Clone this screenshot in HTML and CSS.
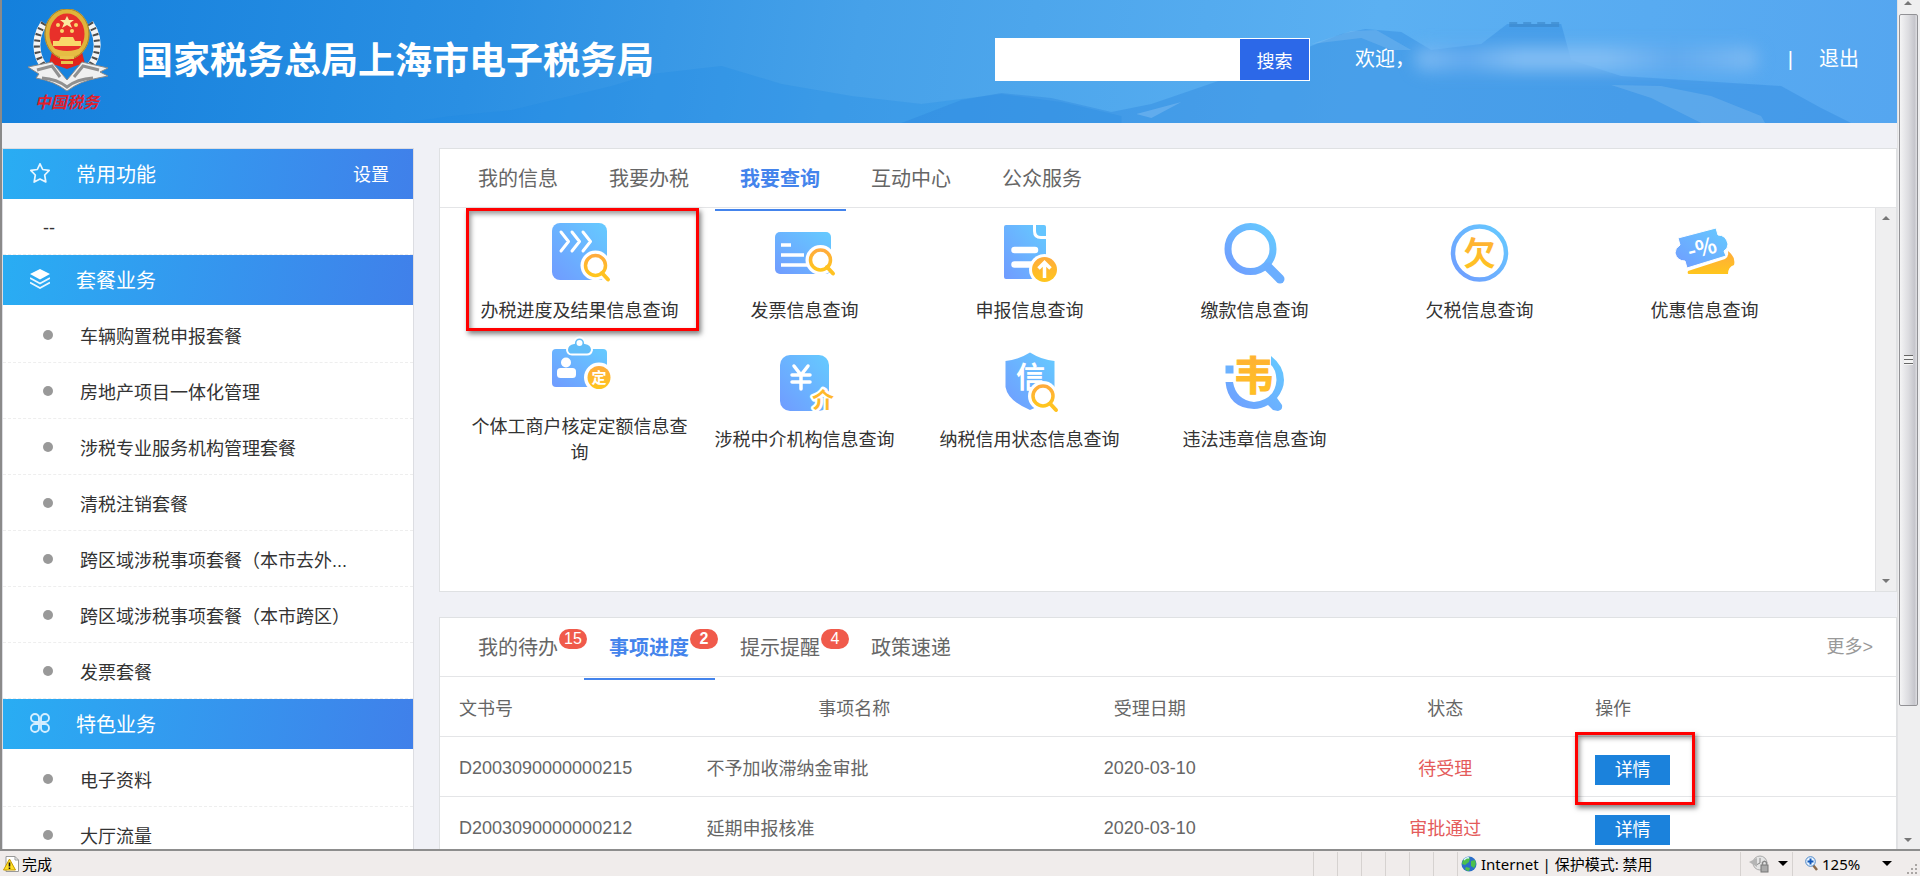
FILE: index.html
```html
<!DOCTYPE html>
<html lang="zh-CN">
  <head>
    <meta charset="utf-8" />
    <title>国家税务总局上海市电子税务局</title>
    <link rel="stylesheet" href="styles.css">
  </head>
  <body>
    <svg class="defs" width="0" height="0" aria-hidden="true">
      <defs>
        <linearGradient id="blue" x1="0" y1="1" x2="1" y2="0">
          <stop offset="0" stop-color="#709bff" />
          <stop offset="1" stop-color="#65cbff" />
        </linearGradient>
        <linearGradient id="gold" x1="0" y1="0" x2="0" y2="1">
          <stop offset="0" stop-color="#ffab3d" />
          <stop offset="1" stop-color="#ffc61d" />
        </linearGradient>
      </defs>
    </svg>

    <div class="window">
      <div class="viewport">
        <div class="page">
          <header class="header">
            <svg class="scenery" viewBox="0 0 1896 123" preserveAspectRatio="none" aria-hidden="true">
              <path d="M400 123 L450 116 L510 110 L560 98 L610 86 L650 74 L720 66 L780 84 L850 96 L920 104 L1000 94 L1060 102 L1120 116 L1120 123Z" fill="#1d87e4" opacity=".25" />
              <path d="M900 123 L960 100 L1000 93 L1050 98 L1110 112 L1150 104 L1220 80 L1290 54 L1340 34 L1364 29 L1400 32 L1430 50 L1480 44 L1506 24 L1560 24 L1570 60 L1620 76 L1780 86 L1820 108 L1850 123Z" fill="#2c88df" opacity=".4" />
              <path d="M1310 44 L1350 31 L1375 30 L1410 50 L1390 50 L1360 38Z" fill="#9cccf5" opacity=".25" />
              <path d="M1610 85 L1660 86 L1710 96 L1760 116 L1764 123 L1700 123 L1650 98Z" fill="#9cccf5" opacity=".25" />
              <path d="M1135 114 L1180 102 L1150 118Z" fill="#9cccf5" opacity=".35" />
              <path d="M1508 22 h8 v2 h6 v-2 h8 v2 h6 v-2 h8 v2 h6 v-2 h8 v5 h-50z" fill="#3b86c8" opacity=".6" />
            </svg>
            <div class="brand">
              <svg class="emblem" viewBox="0 0 84 106" role="img" aria-label="中国税务">
                <g fill="none" stroke="#f4f4f4" stroke-width="7">
                  <path d="M18 14 C6 32 8 56 33 70" />
                  <path d="M64 14 C76 32 74 56 49 70" />
                </g>
                <g fill="none" stroke="#4c4c4c" stroke-width="6" stroke-dasharray="2 4">
                  <path d="M18 14 C6 32 8 56 33 70" />
                  <path d="M64 14 C76 32 74 56 49 70" />
                </g>
                <ellipse cx="41" cy="26" rx="20" ry="25" fill="#df2a20" />
                <path d="M26 43 h30 l4 16 -8 -3 -11 4 -11 -4 -8 3z" fill="#e0241c" />
                <ellipse cx="41" cy="25" rx="20" ry="23" fill="#e8302a" stroke="#dfb43a" stroke-width="5" />
                <ellipse cx="41" cy="25" rx="22" ry="25" fill="none" stroke="#a8842b" stroke-width="1" />
                <path d="M41 7 l2 4 5 0 -4 3 2 5 -5 -3 -5 3 2 -5 -4 -3 5 0z" fill="#fbe9a0" />
                <g fill="#f9d86a">
                  <circle cx="32" cy="16" r="2" />
                  <circle cx="50" cy="16" r="2" />
                  <circle cx="36" cy="22" r="2" />
                  <circle cx="46" cy="22" r="2" />
                  <path d="M35 28 h12 l2 4 h6 v5 h-28 v-5 h6z" />
                </g>
                <path d="M25 38 Q41 46 57 38 L53 45 Q41 51 29 45Z" fill="#e6bd43" />
                <path d="M34 47 h14 v3 h-14z M35 52 h12 v3 h-12z" fill="#e9c34c" />
                <path d="M2 58 L26 53 L41 71 L56 53 L82 59 L74 63 L82 67 L72 69 Q54 72 41 82 Q28 72 10 69 L13 65Z" fill="#f0f0f0" stroke="#8b8b8b" />
                <path d="M11 61 L26 57 L34 68 M73 61 L57 57 L48 68 M16 69 Q31 70 41 78 Q51 70 67 69" fill="none" stroke="#909090" stroke-width="3" />
                <text class="emblem-text" x="41" y="99" text-anchor="middle">中国税务</text>
              </svg>
              <h1 class="brand-title">国家税务总局上海市电子税务局</h1>
            </div>
            <form class="search">
              <input class="search-input" type="text" aria-label="搜索内容" />
              <button class="search-button" type="button">搜索</button>
            </form>
            <div class="user">
              <span>欢迎，</span>
              <span class="user-name"></span>
              <span class="user-divider">|</span>
              <a class="user-exit" href="#">退出</a>
            </div>
          </header>

          <div class="content">
            <nav class="sidebar">
              <h2 class="side-title">
                <svg class="side-icon" viewBox="0 0 20 20" aria-hidden="true"><path d="M10 .8 L12.700 6.500 L19.200 7.300 L14.700 12 L15.800 19 L10 16 L4.200 19 L5.300 12 L.8 7.300 L7.300 6.500Z" fill="none" stroke="#e8f6ff" stroke-width="1.700" stroke-linejoin="round" /></svg>
                常用功能
                <a class="side-setting" href="#">设置</a>
              </h2>
              <p class="side-empty">--</p>

              <h2 class="side-title">
                <svg class="side-icon" viewBox="0 0 20 20" aria-hidden="true"><path d="M10 0 L20 5 L10 10.500 L0 5Z" fill="#fff" /><path d="M0 9 L10 14.500 L20 9 M0 13.500 L10 19 L20 13.500" fill="none" stroke="#e8f6ff" stroke-width="1.800" /></svg>
                套餐业务
              </h2>
              <ul class="side-list">
                <li><a href="#">车辆购置税申报套餐</a></li>
                <li><a href="#">房地产项目一体化管理</a></li>
                <li><a href="#">涉税专业服务机构管理套餐</a></li>
                <li><a href="#">清税注销套餐</a></li>
                <li><a href="#">跨区域涉税事项套餐（本市去外...</a></li>
                <li><a href="#">跨区域涉税事项套餐（本市跨区）</a></li>
                <li><a href="#">发票套餐</a></li>
              </ul>

              <h2 class="side-title">
                <svg class="side-icon" viewBox="0 0 20 20" aria-hidden="true"><path d="M9 9 H5 A4 4 0 1 1 9 5Z M11 9 V5 A4 4 0 1 1 15 9Z M9 11 V15 A4 4 0 1 1 5 11Z M11 11 H15 A4 4 0 1 1 11 15Z" fill="none" stroke="#d4eeff" stroke-width="1.900" /></svg>
                特色业务
              </h2>
              <ul class="side-list">
                <li><a href="#">电子资料</a></li>
                <li><a href="#">大厅流量</a></li>
              </ul>
            </nav>

            <main class="main">
              <section class="panel">
                <div class="tabs">
                  <a class="tab" href="#">我的信息</a>
                  <a class="tab" href="#">我要办税</a>
                  <a class="tab active" href="#">我要查询</a>
                  <a class="tab" href="#">互动中心</a>
                  <a class="tab" href="#">公众服务</a>
                </div>
                <div class="service-box">
                  <div class="services">
                    <a class="service marked" href="#">
                      <svg class="service-icon" viewBox="0 0 62 62" aria-hidden="true">
                        <rect x="3" y="1" width="55" height="57" rx="8" fill="url(#blue)" />
                        <path d="M12 10 l7.500 9.500 -7.500 9.500 M23 10 l7.500 9.500 -7.500 9.500 M34 10 l7.500 9.500 -7.500 9.500" fill="none" stroke="#fff" stroke-width="3" stroke-linecap="round" stroke-linejoin="round" />
                        <circle cx="46.500" cy="43.500" r="15" fill="#fff" />
                        <path d="M53 51 L59 58" stroke="#fff" stroke-width="8" />
                        <circle cx="46.500" cy="43.500" r="10" fill="#fff" stroke="url(#gold)" stroke-width="3.500" />
                        <path d="M53 51 L59 57.500" stroke="#ffc222" stroke-width="4" stroke-linecap="round" />
                      </svg>
                      <span class="service-name">办税进度及结果信息查询</span>
                    </a>
                    <a class="service" href="#">
                      <svg class="service-icon" viewBox="0 0 62 62" aria-hidden="true">
                        <rect x="1" y="10" width="56" height="42" rx="5" fill="url(#blue)" />
                        <path d="M7 23 H17 M7 33 H30 M7 43 H34" stroke="#fff" stroke-width="3.500" />
                        <circle cx="46.500" cy="38" r="15" fill="#fff" />
                        <circle cx="46.500" cy="38" r="10" fill="#fff" stroke="url(#gold)" stroke-width="3.500" />
                        <path d="M53 45 L59 51.500" stroke="#ffc222" stroke-width="4" stroke-linecap="round" />
                      </svg>
                      <span class="service-name">发票信息查询</span>
                    </a>
                    <a class="service" href="#">
                      <svg class="service-icon" viewBox="0 0 62 62" aria-hidden="true">
                        <path d="M7 3 H34 V9 Q34 17 42 17 H47 V57 H7 Q5 57 5 55 V5 Q5 3 7 3Z" fill="url(#blue)" />
                        <path d="M37 3 H45 Q47 3 47 5 V14 H42 Q37 14 37 9Z" fill="#65c5ff" />
                        <path d="M15.500 28 H36 M15.500 42.500 H32" stroke="#fff" stroke-width="6.500" stroke-linecap="round" />
                        <circle cx="45.500" cy="47.500" r="15.500" fill="#fff" />
                        <circle cx="45.500" cy="47.500" r="12.500" fill="url(#gold)" />
                        <path d="M45.500 56 V41 M39.500 46.500 L45.500 40.500 L51.500 46.500" fill="none" stroke="#fff" stroke-width="3.500" />
                      </svg>
                      <span class="service-name">申报信息查询</span>
                    </a>
                    <a class="service" href="#">
                      <svg class="service-icon" viewBox="0 0 62 62" aria-hidden="true">
                        <circle cx="26.500" cy="27" r="22.500" fill="none" stroke="url(#blue)" stroke-width="7" />
                        <path d="M44 45 L56 57" stroke="#6baeff" stroke-width="9" stroke-linecap="round" />
                      </svg>
                      <span class="service-name">缴款信息查询</span>
                    </a>
                    <a class="service" href="#">
                      <svg class="service-icon" viewBox="0 0 62 62" aria-hidden="true">
                        <circle cx="30.500" cy="31" r="26.500" fill="none" stroke="url(#blue)" stroke-width="4.500" />
                        <text class="glyph" x="30.500" y="43" font-size="32" text-anchor="middle" fill="url(#gold)">欠</text>
                      </svg>
                      <span class="service-name">欠税信息查询</span>
                    </a>
                    <a class="service" href="#">
                      <svg class="service-icon" viewBox="0 0 62 62" aria-hidden="true">
                        <path d="M14 49 L51 37 Q55 35 54 29 Q62 35 60 43 Q54 45 54 52 H15 Q13 52 14 49Z" fill="url(#gold)" />
                        <path d="M4 16 L42 6 L44 13 Q52 13 54 22 Q54 27 50 29 L52 34 L13 46 L11 39 Q3 39 1 31 Q1 26 6 23Z" fill="url(#blue)" stroke="#fff" stroke-width="1" />
                        <text class="glyph" x="28" y="34" font-size="22" text-anchor="middle" fill="#fff" transform="rotate(-14 28 26)">-%</text>
                      </svg>
                      <span class="service-name">优惠信息查询</span>
                    </a>
                    <a class="service" href="#">
                      <svg class="service-icon" viewBox="0 0 62 62" aria-hidden="true">
                        <rect x="3" y="11" width="55" height="38" rx="4" fill="url(#blue)" />
                        <path d="M25 5 A5.500 5.500 0 0 1 36 5 Q43 6 43 12 Q42 16.500 38 16.500 H23 Q18.500 16.500 18 12 Q18 6 25 5Z" fill="#62bdf8" stroke="#fff" stroke-width="2" />
                        <circle cx="30.500" cy="5" r="3" fill="#fff" />
                        <circle cx="17" cy="24.500" r="5" fill="#fff" />
                        <rect x="8" y="30" width="19" height="10" rx="3.500" fill="#fff" />
                        <circle cx="50" cy="39.500" r="15" fill="#fff" />
                        <circle cx="50" cy="39.500" r="11.500" fill="url(#gold)" />
                        <text class="glyph" x="50" y="45" font-size="15" text-anchor="middle" fill="#fff">定</text>
                      </svg>
                      <span class="service-name">个体工商户核定定额信息查询</span>
                    </a>
                    <a class="service" href="#">
                      <svg class="service-icon" viewBox="0 0 62 62" aria-hidden="true">
                        <rect x="6" y="4" width="49" height="56" rx="10" fill="url(#blue)" />
                        <path d="M20 15 L27 24 L34 15 M27 24 V38 M18 24 H36 M18 31 H36" fill="none" stroke="#fff" stroke-width="3.500" stroke-linecap="round" />
                        <text class="glyph" x="49" y="57" font-size="22" text-anchor="middle" fill="#ffb92c" stroke="#fff" stroke-width="5" stroke-linejoin="round" paint-order="stroke">介</text>
                      </svg>
                      <span class="service-name">涉税中介机构信息查询</span>
                    </a>
                    <a class="service" href="#">
                      <svg class="service-icon" viewBox="0 0 62 62" aria-hidden="true">
                        <path d="M31 1.500 Q43 9 55.500 10 V36 Q53 50 31 59 Q9 50 6.500 36 V10 Q19 9 31 1.500Z" fill="url(#blue)" />
                        <text class="glyph" x="31.500" y="37" font-size="29" text-anchor="middle" fill="#fff">信</text>
                        <circle cx="44" cy="45" r="15" fill="#fff" />
                        <circle cx="44" cy="45" r="10" fill="#fff" stroke="url(#gold)" stroke-width="3.500" />
                        <path d="M51 52.500 L57 59" stroke="#ffc222" stroke-width="4" stroke-linecap="round" />
                      </svg>
                      <span class="service-name">纳税信用状态信息查询</span>
                    </a>
                    <a class="service" href="#">
                      <svg class="service-icon" viewBox="0 0 62 62" aria-hidden="true">
                        <path d="M47 5 Q60 15 60 29 Q60 38 53 47 L58 54 Q59 59 54 60 L49 59 L44 54 Q37 58 30 58 Q4 57 1.500 31 H9 Q12 49 30 51 Q51 49 52.500 29 Q52 18 47 14Z" fill="url(#blue)" />
                        <rect x="1.500" y="14.500" width="8" height="8" fill="#6cb2ff" />
                        <text class="glyph heavy" x="29.500" y="39" font-size="40" text-anchor="middle" fill="url(#gold)" stroke="#ffb92c">韦</text>
                      </svg>
                      <span class="service-name">违法违章信息查询</span>
                    </a>
                  </div>
                  <div class="scrollbar" aria-hidden="true">
                    <span class="arrow up"></span>
                    <span class="arrow down"></span>
                  </div>
                </div>
              </section>

              <section class="panel">
                <div class="tabs">
                  <a class="tab" href="#">我的待办<span class="badge">15</span></a>
                  <a class="tab active" href="#">事项进度<span class="badge">2</span></a>
                  <a class="tab" href="#">提示提醒<span class="badge">4</span></a>
                  <a class="tab" href="#">政策速递</a>
                  <a class="more" href="#">更多&gt;</a>
                </div>
                <table class="progress">
                  <thead>
                    <tr>
                      <th class="col-no">文书号</th>
                      <th class="col-name">事项名称</th>
                      <th class="col-date">受理日期</th>
                      <th class="col-state">状态</th>
                      <th class="col-action">操作</th>
                    </tr>
                  </thead>
                  <tbody>
                    <tr>
                      <td class="col-no">D2003090000000215</td>
                      <td class="col-name">不予加收滞纳金审批</td>
                      <td class="col-date">2020-03-10</td>
                      <td class="col-state">待受理</td>
                      <td class="col-action"><div class="mark"><button class="detail" type="button">详情</button></div></td>
                    </tr>
                    <tr>
                      <td class="col-no">D2003090000000212</td>
                      <td class="col-name">延期申报核准</td>
                      <td class="col-date">2020-03-10</td>
                      <td class="col-state">审批通过</td>
                      <td class="col-action"><button class="detail" type="button">详情</button></td>
                    </tr>
                  </tbody>
                </table>
              </section>
            </main>
          </div>
        </div>

        <div class="scrollbar page-scroll" aria-hidden="true">
          <span class="arrow up"></span>
          <span class="thumb"><i></i></span>
          <span class="arrow down"></span>
        </div>
      </div>

      <footer class="statusbar">
        <div class="status-text">
          <svg width="16" height="16" viewBox="0 0 16 16" aria-hidden="true"><path d="M3 .5 H12 L15.500 4 V15.500 H3Z" fill="#fff" stroke="#999" /><path d="M12 .5 V4 H15.500" fill="none" stroke="#999" /><path d="M6.500 3 L12.500 14 H.5Z" fill="#ffdf26" stroke="#c79a00" /><path d="M6.500 6.500 V10.500 M6.500 11.500 V13" stroke="#111" stroke-width="1.600" /></svg>
          完成
        </div>
        <span class="slot"></span>
        <span class="slot"></span>
        <span class="slot"></span>
        <span class="slot"></span>
        <span class="slot"></span>
        <span class="slot"></span>
        <div class="zone">
          <svg width="16" height="16" viewBox="0 0 16 16" aria-hidden="true"><circle cx="8" cy="8" r="7.500" fill="#2b6fc9" /><path d="M3 3 Q7 0 9 2 L8 6 L4 9 L1 8 Q1 5 3 3Z M10 5 L14 4 Q16 8 13 12 L10 10Z M5 11 L9 12 L8 15 Q5 15 4 13Z" fill="#4cc04c" /><path d="M3 4 Q5 1 8 2" stroke="#d6f3ff" stroke-width="1.500" fill="none" /></svg>
          Internet | 保护模式: 禁用
        </div>
        <div class="privacy">
          <svg width="20" height="18" viewBox="0 0 20 18" aria-hidden="true"><circle cx="11" cy="8" r="7" fill="#e4e4e4" stroke="#aaa" /><path d="M11 3 V8 L7 10" fill="none" stroke="#888" /><path d="M0 7 L8 3 V12Z" fill="#b5b5b5" /><rect x="12" y="10" width="7" height="7" fill="#aaa" stroke="#777" /><path d="M13.500 10 V7.500 Q15.500 5 17.500 7.500 V10" fill="none" stroke="#888" stroke-width="1.500" /></svg>
          <span class="caret"></span>
        </div>
        <div class="zoom">
          <svg width="13" height="15" viewBox="0 0 13 15" aria-hidden="true"><path d="M8 9 L12 14" stroke="#8a6a4a" stroke-width="2.500" /><circle cx="5.500" cy="5.500" r="4.800" fill="#e8f4ff" stroke="#4c86c8" /><path d="M5.500 2.500 V8.500 M2.500 5.500 H8.500" stroke="#1257b8" stroke-width="2" /></svg>
          <span>125%</span>
          <span class="caret"></span>
        </div>
        <svg class="grip" width="12" height="12" viewBox="0 0 12 12" aria-hidden="true"><path d="M9 0h2v2h-2z M5 4h2v2h-2z M9 4h2v2h-2z M1 8h2v2h-2z M5 8h2v2h-2z M9 8h2v2h-2z" fill="#aaa6a4" /></svg>
      </footer>
    </div>
  </body>
</html>
```
FILE: styles.css
```css
* {
  box-sizing: border-box;
}
body {
  margin: 0;
  font-family: "Liberation Sans", "Noto Sans CJK SC", sans-serif;
  font-size: 18px;
  color: #333;
  background-color: #f0f1f6;
}
a {
  color: inherit;
  text-decoration: none;
}
h1,
h2,
p,
ul {
  margin: 0;
  padding: 0;
}
button {
  padding: 0;
  font-family: inherit;
  cursor: pointer;
}
.defs {
  position: absolute;
}
.window {
  display: flex;
  flex-direction: column;
  height: 100vh;
}
.viewport {
  display: flex;
  flex: 1;
  min-height: 0;
  border-left: 2px solid #8a8a8a;
}
.page {
  flex: 1;
  min-width: 0;
  overflow: hidden;
}

/* header */
.header {
  position: relative;
  display: flex;
  align-items: center;
  height: 123px;
  color: #fff;
  font-size: 20px;
  background: linear-gradient(100deg, #1480dc 0%, #2a8fe3 25%, #46a1e9 45%, #5bb0f2 72%, #55a6f0 100%);
}
.scenery {
  position: absolute;
  top: 0;
  left: 0;
  width: 100%;
  height: 100%;
}
.brand {
  position: relative;
  display: flex;
  flex: 1;
  align-items: center;
  gap: 26px;
  padding-left: 24px;
}
.emblem {
  width: 84px;
  height: 106px;
}
.emblem-text {
  font-size: 16px;
  font-weight: bold;
  font-style: italic;
  fill: #e0202c;
}
.brand-title {
  font-size: 37px;
  line-height: 50px;
  font-weight: bold;
  white-space: nowrap;
}
.search {
  position: relative;
  display: flex;
  width: 315px;
  height: 43px;
  margin-right: 45px;
  margin-bottom: 4px;
}
.search-input {
  flex: 1;
  min-width: 0;
  padding: 0 10px;
  border: none;
  font-size: 18px;
  background-color: #fff;
}
.search-button {
  width: 71px;
  border: 1px solid #fff;
  color: #fff;
  font-size: 18px;
  background-color: #2c68e8;
}
.user {
  position: relative;
  display: flex;
  align-items: center;
  width: 542px;
  padding-right: 38px;
  line-height: 30px;
  margin-bottom: 6px;
}
.user-name {
  flex: 1;
  height: 24px;
  margin-right: 30px;
  border-radius: 12px;
  background: linear-gradient(90deg, #7dbaf2, #62aaee 15%, #82bdf3 30%, #82bdf3 55%, #62aaee 75%, #7dbaf2);
  filter: blur(8px);
}
.user-exit {
  margin-left: 26px;
}

/* page body */
.content {
  display: flex;
  align-items: flex-start;
  gap: 25px;
  padding-top: 25px;
}
.sidebar {
  width: 412px;
  border: 1px solid #dcdde2;
  background-color: #fff;
}
.side-title {
  display: flex;
  align-items: center;
  height: 50px;
  padding: 0 24px 2px 27px;
  color: #fff;
  font-size: 20px;
  font-weight: normal;
  background: linear-gradient(100deg, #29adf3, #4080ea);
}
.side-icon {
  width: 20px;
  height: 20px;
  margin-right: 26px;
}
.side-setting {
  margin-left: auto;
  font-size: 18px;
}
.side-empty {
  height: 56px;
  padding-left: 40px;
  line-height: 58px;
  border-bottom: 1px dashed #eee;
}
.side-list {
  padding-top: 2px;
  list-style: none;
}
.side-list li {
  display: flex;
  align-items: center;
  height: 56px;
  padding-left: 40px;
  border-bottom: 1px dashed #eee;
}
.side-list li::before {
  content: "";
  width: 10px;
  height: 10px;
  margin-right: 27px;
  border-radius: 50%;
  background-color: #999;
}
.main {
  flex: 1;
  min-width: 0;
}
.panel {
  margin-bottom: 25px;
  border: 1px solid #dfe1e3;
  background-color: #fff;
}
.tabs {
  display: flex;
  height: 59px;
  padding: 0 23px 0 13px;
  border-bottom: 1px solid #e4e5e7;
}
.tab {
  position: relative;
  padding: 0 26px 0 25px;
  color: #666;
  font-size: 20px;
  line-height: 61px;
}
.tab.active {
  color: #4484ec;
  font-weight: bold;
}
.tab.active::after {
  content: "";
  position: absolute;
  left: 0;
  right: 0;
  bottom: -4px;
  height: 2px;
  background-color: #4484ec;
}
.badge {
  position: absolute;
  top: 11px;
  right: -3px;
  width: 28px;
  border-radius: 10px;
  color: #fff;
  font-size: 16px;
  line-height: 20px;
  text-align: center;
  background-color: #f05a4b;
}
.more {
  margin-left: auto;
  color: #999;
  line-height: 58px;
}

/* query services */
.service-box {
  display: flex;
  height: 383px;
}
.services {
  display: grid;
  flex: 1;
  grid-template-columns: repeat(6, 225px);
  align-content: start;
  align-items: center;
  padding-left: 27px;
}
.service {
  position: relative;
  display: flex;
  flex-direction: column;
  align-items: center;
  padding: 14px 4px 0;
}
.service-icon {
  width: 62px;
  height: 62px;
  margin-bottom: 14px;
  overflow: visible;
}
.service-name {
  line-height: 26px;
  text-align: center;
}
.service.marked::after {
  content: "";
  position: absolute;
  top: 0;
  left: -1px;
  right: -7px;
  bottom: -7px;
  border: 3px solid #f00;
  box-shadow: 2px 3px 5px rgba(0, 0, 0, 0.5), inset 2px 3px 5px rgba(0, 0, 0, 0.4);
}
.glyph {
  font-family: "Noto Sans CJK SC", sans-serif;
  font-weight: bold;
}
.glyph.heavy {
  stroke-width: 1px;
}

/* progress table */
.progress {
  width: 100%;
  table-layout: fixed;
  border-collapse: separate;
  border-spacing: 0;
  color: #666;
}
.progress th,
.progress td {
  height: 60px;
  padding: 0;
  font-weight: normal;
  text-align: center;
  border-bottom: 1px solid #e4e5e7;
}
.progress .col-no {
  width: 18.3%;
  padding-left: 19px;
  text-align: left;
}
.progress .col-name {
  width: 20.3%;
}
.progress td.col-name {
  text-align: left;
}
.progress .col-date,
.progress .col-state {
  width: 20.3%;
}
.progress td.col-no,
.progress td.col-date {
  padding-top: 4px;
}
.progress td.col-state {
  color: #e45b5b;
}
.progress .col-action {
  padding-left: 2px;
  text-align: left;
}
.progress td.col-action {
  padding-top: 7px;
}
.detail {
  display: block;
  width: 75px;
  height: 30px;
  border: none;
  color: #fff;
  font-size: 18px;
  line-height: 28px;
  background-color: #1b82dc;
}
.mark {
  position: relative;
  width: 75px;
}
.mark::after {
  content: "";
  position: absolute;
  top: -23px;
  left: -20px;
  right: -25px;
  bottom: -20px;
  border: 3px solid #f00;
  box-shadow: 2px 3px 5px rgba(0, 0, 0, 0.5), inset 2px 3px 5px rgba(0, 0, 0, 0.4);
  pointer-events: none;
}

/* scrollbars */
.scrollbar {
  display: flex;
  flex-direction: column;
  justify-content: space-between;
  align-items: center;
  width: 21px;
  padding: 8px 0;
  border-left: 1px solid #e2e2e4;
  background-color: #efeff0;
}
.arrow {
  border: 4px solid transparent;
}
.arrow.up {
  border-top: none;
  border-bottom-color: #777;
}
.arrow.down {
  border-bottom: none;
  border-top-color: #777;
}
.page-scroll {
  width: 23px;
  padding: 1px 2px 7px 0;
}
.thumb {
  display: flex;
  flex: 0 1 692px;
  align-items: center;
  justify-content: center;
  width: 19px;
  margin: 9px 0 auto;
  border: 1px solid #929296;
  border-radius: 2px;
  background: linear-gradient(90deg, #f4f4f5, #dcdce0 50%, #c6c6cc 85%, #dedee2);
}
.thumb i {
  width: 9px;
  height: 10px;
  background: repeating-linear-gradient(#666 0, #666 1px, #f4f4f4 1px, #f4f4f4 4px);
}

/* browser status bar */
.statusbar {
  display: flex;
  align-items: center;
  height: 27px;
  padding-right: 2px;
  border-top: 2px solid #8d8d8d;
  color: #000;
  font-family: "Noto Sans", "Noto Sans CJK SC", sans-serif;
  font-size: 15px;
  line-height: 24px;
  background-color: #f0eceb;
}
.statusbar svg {
  flex: none;
}
.status-text {
  display: flex;
  flex: 1;
  align-items: center;
  gap: 3px;
  padding-left: 3px;
}
.slot {
  width: 24px;
  height: 24px;
  border-left: 1px solid #d6d2d0;
}
.zone,
.privacy,
.zoom {
  display: flex;
  align-items: center;
  height: 24px;
  border-left: 1px solid #d6d2d0;
}
.zone {
  gap: 4px;
  width: 283px;
  padding-left: 3px;
}
.privacy {
  gap: 9px;
  width: 52px;
  padding-left: 8px;
}
.zoom {
  gap: 4px;
  width: 114px;
  padding-left: 12px;
}
.zoom .caret {
  margin-left: auto;
  margin-right: 14px;
}
.caret {
  border: 5px solid transparent;
  border-top-color: #000;
  border-bottom: none;
}
.grip {
  align-self: flex-end;
}
```
